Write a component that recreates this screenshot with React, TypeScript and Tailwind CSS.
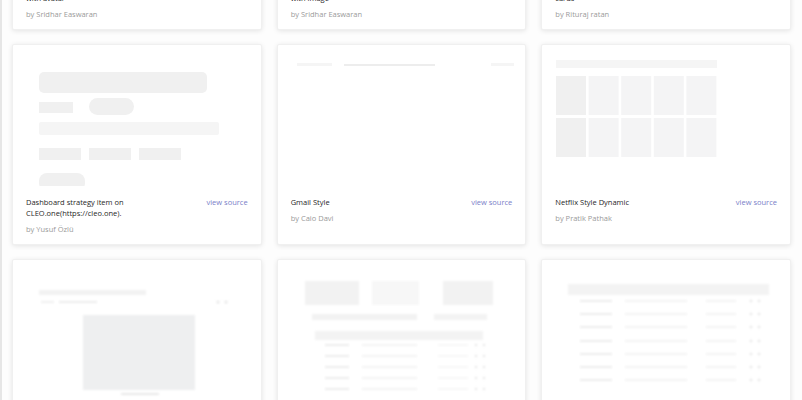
import type { ReactNode } from 'react';

type Item = {
	title: string;
	author: string;
	preview?: ReactNode;
};

const fill = '#f0f0f0';
const faint = '#f5f5f5';

const DashboardPreview = () => (
	<svg width="250" height="141" viewBox="0 0 250 141" className="blur-[0.6px]">
		<rect x="26" y="27" width="168" height="21" rx="5" fill={fill} />
		<rect x="26" y="57" width="34" height="11" fill={fill} />
		<rect x="76" y="53" width="45" height="17" rx="8.5" fill={fill} />
		<rect x="26" y="77" width="180" height="13" rx="2" fill={faint} />
		<rect x="26" y="103" width="42" height="12" fill={fill} />
		<rect x="76" y="103" width="42" height="12" fill={fill} />
		<rect x="126" y="103" width="42" height="12" fill={fill} />
		<rect x="26" y="128" width="46" height="18" rx="8" fill={fill} />
	</svg>
);

const GmailPreview = () => (
	<svg width="250" height="141" viewBox="0 0 250 141" className="blur-[0.6px]">
		<rect x="19" y="18" width="35" height="3" fill={faint} />
		<rect x="66" y="19" width="91" height="2" fill="#ededed" />
		<rect x="213" y="18" width="23" height="3" fill={faint} />
	</svg>
);

const NetflixPreview = () => {
	const cols = [0, 1, 2, 3, 4];
	return (
		<svg width="250" height="141" viewBox="0 0 250 141" className="blur-[0.6px]">
			<rect x="14" y="15" width="161" height="8" fill={faint} />
			{cols.map((i) => (
				<g key={i}>
					<rect x={14 + i * 32.6} y="31" width="30" height="39" fill={i === 0 ? '#f0f0f0' : '#f4f4f5'} />
					<rect x={14 + i * 32.6} y="73" width="30" height="39" fill={i === 0 ? '#f0f0f0' : '#f4f4f5'} />
				</g>
			))}
		</svg>
	);
};

const VideoPreview = () => (
	<svg width="250" height="141" viewBox="0 0 250 141" className="blur-[0.8px]">
		<rect x="26" y="30" width="107" height="5" fill="#f2f2f2" />
		<rect x="28" y="41" width="13" height="2" fill="#f0f0f0" />
		<rect x="46" y="41" width="38" height="2" fill="#ececec" />
		<circle cx="205" cy="42" r="1.5" fill="#e6e6e6" />
		<circle cx="213" cy="42" r="1.5" fill="#e6e6e6" />
		<rect x="70" y="55" width="112" height="75" fill="#eeeff0" />
		<rect x="108" y="133" width="38" height="2" fill="#e8e8e8" />
	</svg>
);

const TablePreview = () => {
	const rows = [84, 95, 106, 117, 128];
	return (
		<svg width="250" height="141" viewBox="0 0 250 141" className="blur-[0.9px]">
			<rect x="27" y="21" width="54" height="24" fill="#f2f2f2" />
			<rect x="94" y="21" width="47" height="24" fill="#f7f7f7" />
			<rect x="165" y="21" width="50" height="24" fill="#f2f2f2" />
			<rect x="34" y="54" width="105" height="6" fill="#f2f2f2" />
			<rect x="156" y="54" width="53" height="6" fill="#f3f3f3" />
			<rect x="37" y="71" width="168" height="9" fill="#f3f3f3" />
			{rows.map((y) => (
				<g key={y}>
					<rect x="47" y={y} width="24" height="2" fill="#ececec" />
					<rect x="84" y={y} width="55" height="2" fill="#f3f3f3" />
					<rect x="160" y={y} width="30" height="2" fill="#f7f7f7" />
					<circle cx="198" cy={y + 1} r="1.3" fill="#e8e8e8" />
					<circle cx="206" cy={y + 1} r="1.3" fill="#e8e8e8" />
				</g>
			))}
		</svg>
	);
};

const ListPreview = () => {
	const rows = [40, 53, 66, 80, 93, 106, 119];
	return (
		<svg width="250" height="141" viewBox="0 0 250 141" className="blur-[0.9px]">
			<rect x="26" y="24" width="201" height="11" fill="#f3f3f3" />
			{rows.map((y) => (
				<g key={y}>
					<rect x="38" y={y} width="32" height="2" fill="#ececec" />
					<rect x="83" y={y} width="62" height="2" fill="#f3f3f3" />
					<rect x="164" y={y} width="30" height="2" fill="#f3f3f3" />
					<circle cx="209" cy={y + 1} r="1.3" fill="#e6e6e6" />
					<circle cx="217" cy={y + 1} r="1.3" fill="#e6e6e6" />
				</g>
			))}
		</svg>
	);
};

const rows: Item[][] = [
	[
		{ title: 'Facebook style content loader with avatar', author: 'by Sridhar Easwaran' },
		{ title: 'Instagram style content loader with image', author: 'by Sridhar Easwaran' },
		{ title: 'Bootstrap style grid of product cards', author: 'by Rituraj ratan' },
	],
	[
		{ title: 'Dashboard strategy item on CLEO.one(https://cleo.one).', author: 'by Yusuf Özlü', preview: <DashboardPreview /> },
		{ title: 'Gmail Style', author: 'by Caio Davi', preview: <GmailPreview /> },
		{ title: 'Netflix Style Dynamic', author: 'by Pratik Pathak', preview: <NetflixPreview /> },
	],
	[
		{ title: 'Youtube Video', author: 'by Dami', preview: <VideoPreview /> },
		{ title: 'Dashboard Table', author: 'by Joe', preview: <TablePreview /> },
		{ title: 'Data Table', author: 'by Ana', preview: <ListPreview /> },
	],
];

const Card = ({ item }: { item: Item }) => (
	<div className="h-[201px] bg-white rounded-[2px] border border-[#f0f0f0] shadow-[0_1px_5px_rgba(0,0,0,0.1)] flex flex-col overflow-hidden">
		<div className="h-[152px] shrink-0 overflow-hidden">{item.preview}</div>
		<div className="px-[13px] flex flex-col gap-[5px]">
			<div className="flex justify-between items-start gap-4">
				<p className="text-[7.5px] leading-[11px] text-[#1f1f1f] max-w-[110px]">{item.title}</p>
				<a className="text-[7.5px] leading-[11px] text-[#7a80c8] whitespace-nowrap">view source</a>
			</div>
			<p className="text-[7.5px] leading-[11px] text-[#9a9a9a]">{item.author}</p>
		</div>
	</div>
);

const App = () => {
	return (
		<div className="w-[802px] h-[400px] overflow-hidden bg-[#fdfdfd] border-l-2 border-[#e6e6e6]" style={{ fontFamily: '"Open Sans", "Liberation Sans", sans-serif' }}>
			<div className="-mt-[171px] pl-[10px] pr-[11px] flex flex-col gap-[14px]">
				{rows.map((row, i) => (
					<div key={i} className="grid grid-cols-3 gap-[15px]">
						{row.map((item) => (
							<Card key={item.title} item={item} />
						))}
					</div>
				))}
			</div>
		</div>
	);
};

export default App;
